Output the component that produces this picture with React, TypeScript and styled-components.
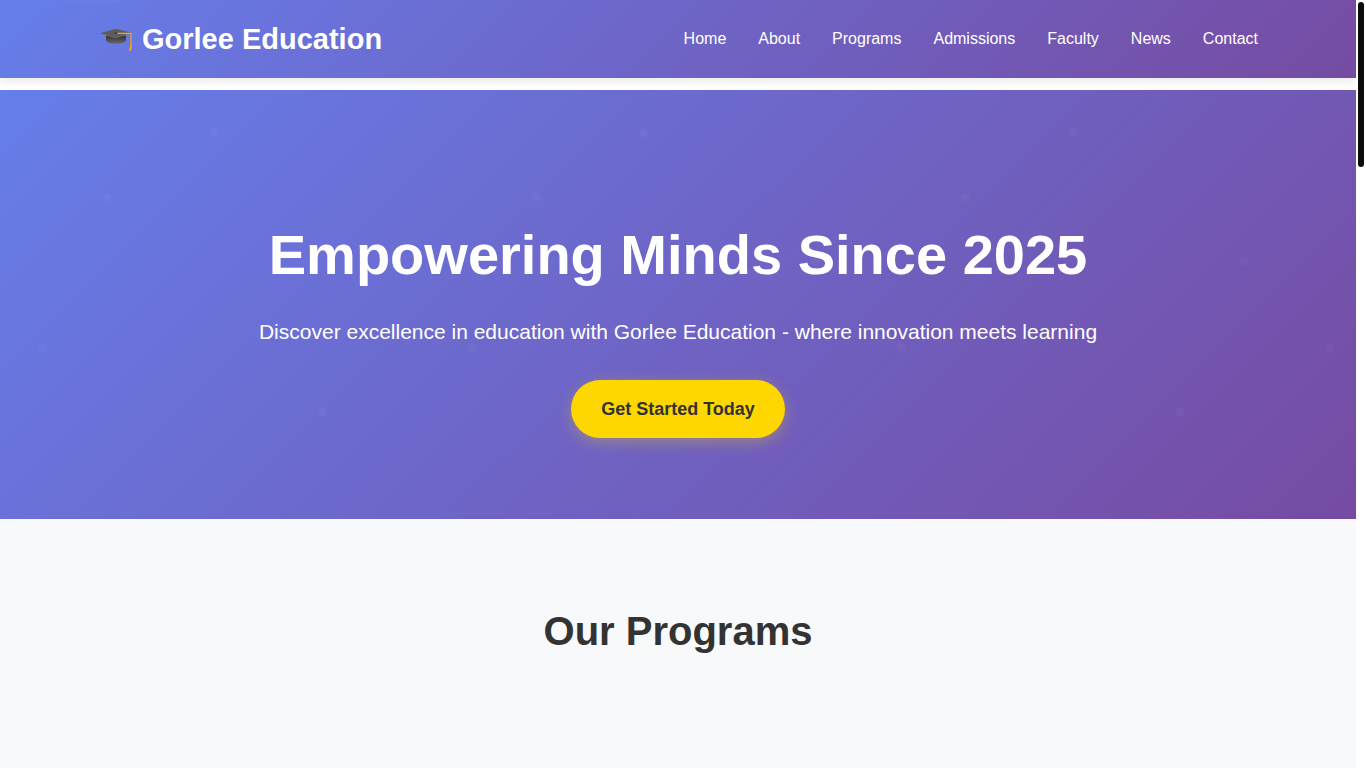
import React from 'react';
import styled, { createGlobalStyle } from 'styled-components';

const brandGradient = 'linear-gradient(135deg, #667eea 0%, #764ba2 100%)';

const GlobalStyle = createGlobalStyle`
  *, *::before, *::after { box-sizing: border-box; margin: 0; padding: 0; }
  body {
    font-family: 'Liberation Sans', Arial, sans-serif;
    font-size: 16px;
    line-height: 26px;
    color: #333;
    background: #fff;
  }
`;

const Page = styled.div`
  display: flex;
  min-height: 100vh;
`;

const Content = styled.div`
  flex: 1;
  min-width: 0;
  display: flex;
  flex-direction: column;
`;

const ScrollTrack = styled.div`
  width: 10px;
  padding: 2px;
  background: #fff;
`;

const ScrollThumb = styled.div`
  height: 165px;
  border-radius: 3px;
  background: #0c0c0c;
`;

const AccentBar = styled.div`
  position: absolute;
  top: 0;
  left: 0;
  width: 121px;
  height: 2px;
  background: #667eea;
`;

const Header = styled.header`
  margin-bottom: 12px;
  background: ${brandGradient};
  box-shadow: 0 2px 10px rgba(0, 0, 0, 0.1);
`;

const HeaderInner = styled.div`
  display: flex;
  align-items: center;
  justify-content: space-between;
  max-width: 1200px;
  margin: 0 auto;
  padding: 16px 20px;
`;

const Logo = styled.a`
  display: flex;
  align-items: center;
  gap: 8px;
  font-size: 29px;
  line-height: 46px;
  font-weight: 700;
  color: #fff;
  text-decoration: none;
`;

const CapIcon = styled.svg`
  width: 36px;
  height: 30px;
`;

const NavList = styled.ul`
  display: flex;
  gap: 32px;
  list-style: none;
`;

const NavLink = styled.a`
  color: #fff;
  text-decoration: none;
`;

const Hero = styled.section`
  padding: 120px 20px 81px;
  text-align: center;
  color: #fff;
  background:
    url("data:image/svg+xml,%3Csvg xmlns='http://www.w3.org/2000/svg' viewBox='0 0 100 100'%3E%3Cg fill='%23fff' fill-opacity='.03'%3E%3Ccircle cx='25' cy='25' r='1'/%3E%3Ccircle cx='75' cy='75' r='1'/%3E%3Ccircle cx='50' cy='10' r='1'/%3E%3Ccircle cx='10' cy='60' r='1'/%3E%3Ccircle cx='90' cy='40' r='1'/%3E%3C/g%3E%3C/svg%3E") 0 0 / auto 100% repeat-x,
    ${brandGradient};
`;

const HeroTitle = styled.h1`
  margin-bottom: 16px;
  font-size: 56px;
  line-height: 90px;
  font-weight: 700;
`;

const HeroText = styled.p`
  margin-bottom: 32px;
  font-size: 21px;
  line-height: 32px;
`;

const CallToAction = styled.button`
  display: block;
  margin: 0 auto;
  padding: 15px 30px;
  border: 0;
  border-radius: 50px;
  background: #ffd700;
  box-shadow: 0 4px 15px rgba(255, 215, 0, 0.3);
  color: #333;
  font: 700 18px/28px 'Liberation Sans', Arial, sans-serif;
  cursor: pointer;
`;

const Programs = styled.section`
  flex: 1;
  padding: 80px 20px;
  background: #f8f9fb;
  text-align: center;
`;

const SectionTitle = styled.h2`
  font-size: 40px;
  line-height: 64px;
  font-weight: 700;
`;

const links = ['Home', 'About', 'Programs', 'Admissions', 'Faculty', 'News', 'Contact'];

function GraduationCap() {
  return (
    <CapIcon viewBox="0 0 36 30" aria-hidden="true">
      <defs>
        <linearGradient id="capBase" x1="0" y1="0" x2="0" y2="1">
          <stop offset="0.2" stopColor="#3a3a3a" />
          <stop offset="1" stopColor="#6a6a6a" />
        </linearGradient>
      </defs>
      <path d="M8 11.5 V16.5 C9 18.6 13 19.8 18 19.8 C23 19.8 27 18.6 28 16.5 V11.5 Z" fill="url(#capBase)" />
      <path d="M2 9.3 L16 5.2 Q18 4.8 20 5.2 L33 8.8 L20 13.2 Q18 13.8 16 13.4 Z" fill="#5c5c5c" />
      <path d="M2 9.3 L16 13.4 Q18 13.8 20 13.2 L33 8.8" fill="none" stroke="#777" strokeWidth="0.6" />
      <ellipse cx="17.6" cy="9" rx="1.6" ry="0.9" fill="#444" />
      <path d="M19.5 9.4 H33 V21" fill="none" stroke="#f5a800" strokeWidth="1.2" strokeLinejoin="round" />
      <path d="M32.4 20.5 H33.8 L33.6 25.5 L32 27.3 L31 26.6 Z" fill="#f5a800" />
    </CapIcon>
  );
}

export default function App() {
  return (
    <Page>
      <GlobalStyle />
      <Content>
        <Header>
          <AccentBar />
          <HeaderInner>
            <Logo href="#home">
              <GraduationCap />
              Gorlee Education
            </Logo>
            <nav aria-label="Main">
              <NavList>
                {links.map((label) => (
                  <li key={label}>
                    <NavLink href={`#${label.toLowerCase()}`}>{label}</NavLink>
                  </li>
                ))}
              </NavList>
            </nav>
          </HeaderInner>
        </Header>
        <Hero id="home">
          <HeroTitle>Empowering Minds Since 2025</HeroTitle>
          <HeroText>
            Discover excellence in education with Gorlee Education - where innovation meets learning
          </HeroText>
          <CallToAction type="button">Get Started Today</CallToAction>
        </Hero>
        <Programs id="programs">
          <SectionTitle>Our Programs</SectionTitle>
        </Programs>
      </Content>
      <ScrollTrack aria-hidden="true">
        <ScrollThumb />
      </ScrollTrack>
    </Page>
  );
}
